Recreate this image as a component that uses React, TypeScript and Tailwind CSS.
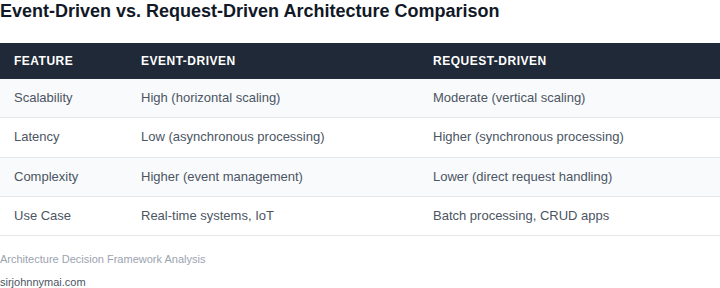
const rows = [
  { feature: "Scalability", event: "High (horizontal scaling)", request: "Moderate (vertical scaling)" },
  { feature: "Latency", event: "Low (asynchronous processing)", request: "Higher (synchronous processing)" },
  { feature: "Complexity", event: "Higher (event management)", request: "Lower (direct request handling)" },
  { feature: "Use Case", event: "Real-time systems, IoT", request: "Batch processing, CRUD apps" },
];

export default function App() {
  return (
    <div className="h-[288px] w-[720px] overflow-hidden bg-white font-['Liberation_Sans',Arial,sans-serif]">
      <h1 className="text-[18px] font-bold leading-[22px] text-[#111827]">
        Event-Driven vs. Request-Driven Architecture Comparison
      </h1>
      <div className="mt-[21px]">
        <div className="grid grid-cols-[127px_292px_1fr] bg-[#1f2937] text-[12px] font-bold uppercase leading-[16px] tracking-[0.5px] text-white">
          <div className="py-[10px] pl-[14px]">Feature</div>
          <div className="py-[10px] pl-[14px]">Event-Driven</div>
          <div className="py-[10px] pl-[14px]">Request-Driven</div>
        </div>
        {rows.map((r, i) => (
          <div
            key={r.feature}
            className={`grid grid-cols-[127px_292px_1fr] border-b border-[#e5e7eb] text-[13px] leading-[18.3px] text-[#4b5563] ${
              i % 2 === 0 ? "bg-[#f9fafb]" : "bg-white"
            }`}
          >
            <div className="py-[10px] pl-[14px]">{r.feature}</div>
            <div className="py-[10px] pl-[14px]">{r.event}</div>
            <div className="py-[10px] pl-[14px]">{r.request}</div>
          </div>
        ))}
      </div>
      <p className="mt-[16px] text-[11px] leading-[14px] text-[#9ca3af]">Architecture Decision Framework Analysis</p>
      <p className="mt-[9px] text-[11px] leading-[14px] text-[#4b5563]">sirjohnnymai.com</p>
    </div>
  );
}
